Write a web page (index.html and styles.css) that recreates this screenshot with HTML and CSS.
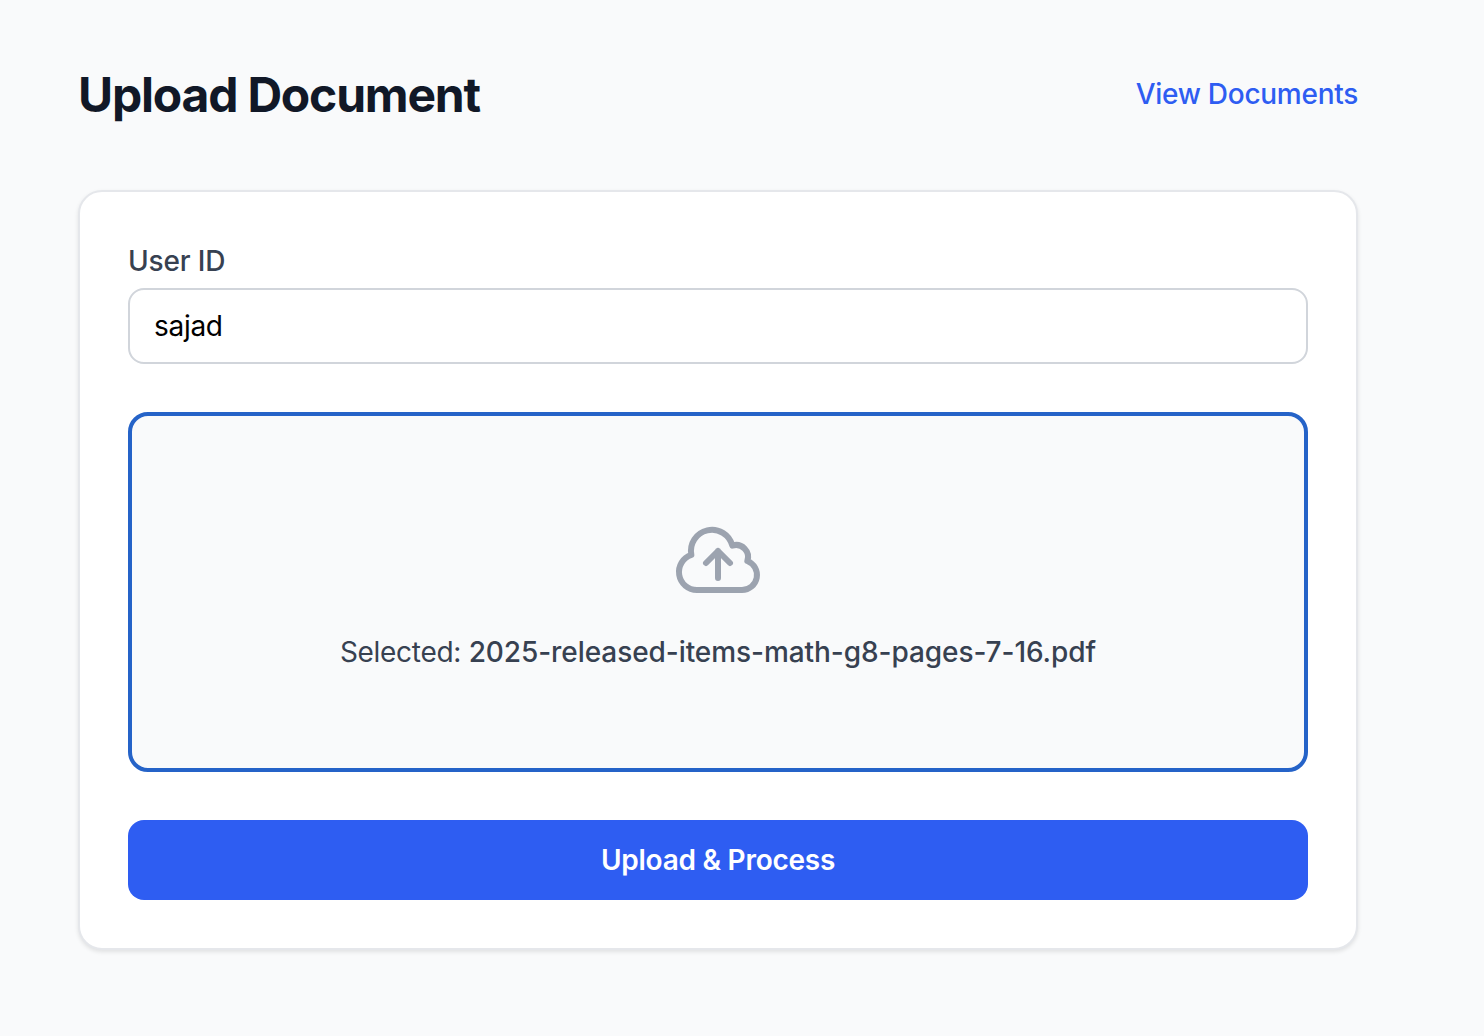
FILE: index.html
```html
<!DOCTYPE html>
<html>
<head>
    <meta http-equiv="Content-Type" content="text/html; charset=utf-8" />
    <title>Upload Document</title>
    <link rel="stylesheet" href="styles.css">
</head>
<body>
<div class="page">
    <div class="top">
        <h1>Upload Document</h1>
        <a href="javascript:;" class="docs_link">View Documents</a>
    </div>
    <form class="card">
        <div class="field">
            <label for="user_id">User ID</label>
            <input id="user_id" type="text" value="sajad">
        </div>
        <div class="drop">
            <svg class="drop_icon" viewBox="0 0 24 24" fill="none" stroke="currentColor" stroke-width="1.5" stroke-linecap="round" stroke-linejoin="round">
                <path d="M12 16.5V9.75m0 0 3 3m-3-3-3 3M6.75 19.5a4.5 4.5 0 0 1-1.41-8.775 5.25 5.25 0 0 1 10.233-2.33 3 3 0 0 1 3.758 3.848A3.752 3.752 0 0 1 18 19.5H6.75Z"/>
            </svg>
            <p>Selected: <span>2025-released-items-math-g8-pages-7-16.pdf</span></p>
        </div>
        <button type="button" class="btn_upload">Upload &amp; Process</button>
    </form>
</div>
</body>
</html>
```

FILE: styles.css
```css
@charset "utf-8";
html,body,h1,div,p,form,label,input,button{padding:0; margin:0; border:0;}
html,body{width:100%;height:100%;}
body{
    background-color:#f9fafb;
    font-family:Inter,"Liberation Sans",sans-serif;
}
.page{
    width:1280px;
    margin-left:78px;
    padding-top:63px;
}
.top{
    display:flex;
    align-items:center;
    justify-content:space-between;
    height:63px;
    margin-bottom:64px;
}
.top h1{
    font-size:48px;
    line-height:63px;
    font-weight:700;
    letter-spacing:-1.2px;
    color:#111827;
}
.docs_link{
    padding-bottom:2px;
    font-size:28px;
    font-weight:500;
    letter-spacing:-.28px;
    color:#2e5df2;
    text-decoration:none;
}
/*card*/
.card{
    display:flex;
    flex-direction:column;
    gap:48px;
    padding:48px;
    background-color:#fff;
    border:2px solid #e5e7eb;
    border-radius:24px;
    box-shadow:0 2px 4px rgba(0,0,0,.1);
}
.field label{
    display:block;
    padding-top:1px;
    font-size:28px;
    line-height:40px;
    font-weight:500;
    letter-spacing:-.15px;
    color:#374151;
    margin-bottom:7px;
}
.field input{
    display:block;
    box-sizing:border-box;
    width:100%;
    height:76px;
    padding:0 24px;
    border:2px solid #d1d5db;
    border-radius:16px;
    background-color:#fff;
    font-family:inherit;
    font-size:28px;
    letter-spacing:-.3px;
    color:#000;
}
.drop{
    box-sizing:border-box;
    height:360px;
    display:flex;
    flex-direction:column;
    align-items:center;
    justify-content:center;
    gap:24px;
    border:4px solid #2563c8;
    border-radius:20px;
    background-color:#f9fafb;
}
.drop_icon{
    width:96px;
    height:96px;
    color:#9ca3af;
}
.drop p{
    font-size:28px;
    line-height:40px;
    letter-spacing:-.3px;
    color:#374151;
}
.drop p span{
    font-weight:500;
    letter-spacing:-.07px;
}
.btn_upload{
    height:80px;
    border-radius:16px;
    background-color:#2e5df2;
    color:#fff;
    font-family:inherit;
    font-size:28px;
    font-weight:600;
    letter-spacing:-.25px;
}
```
